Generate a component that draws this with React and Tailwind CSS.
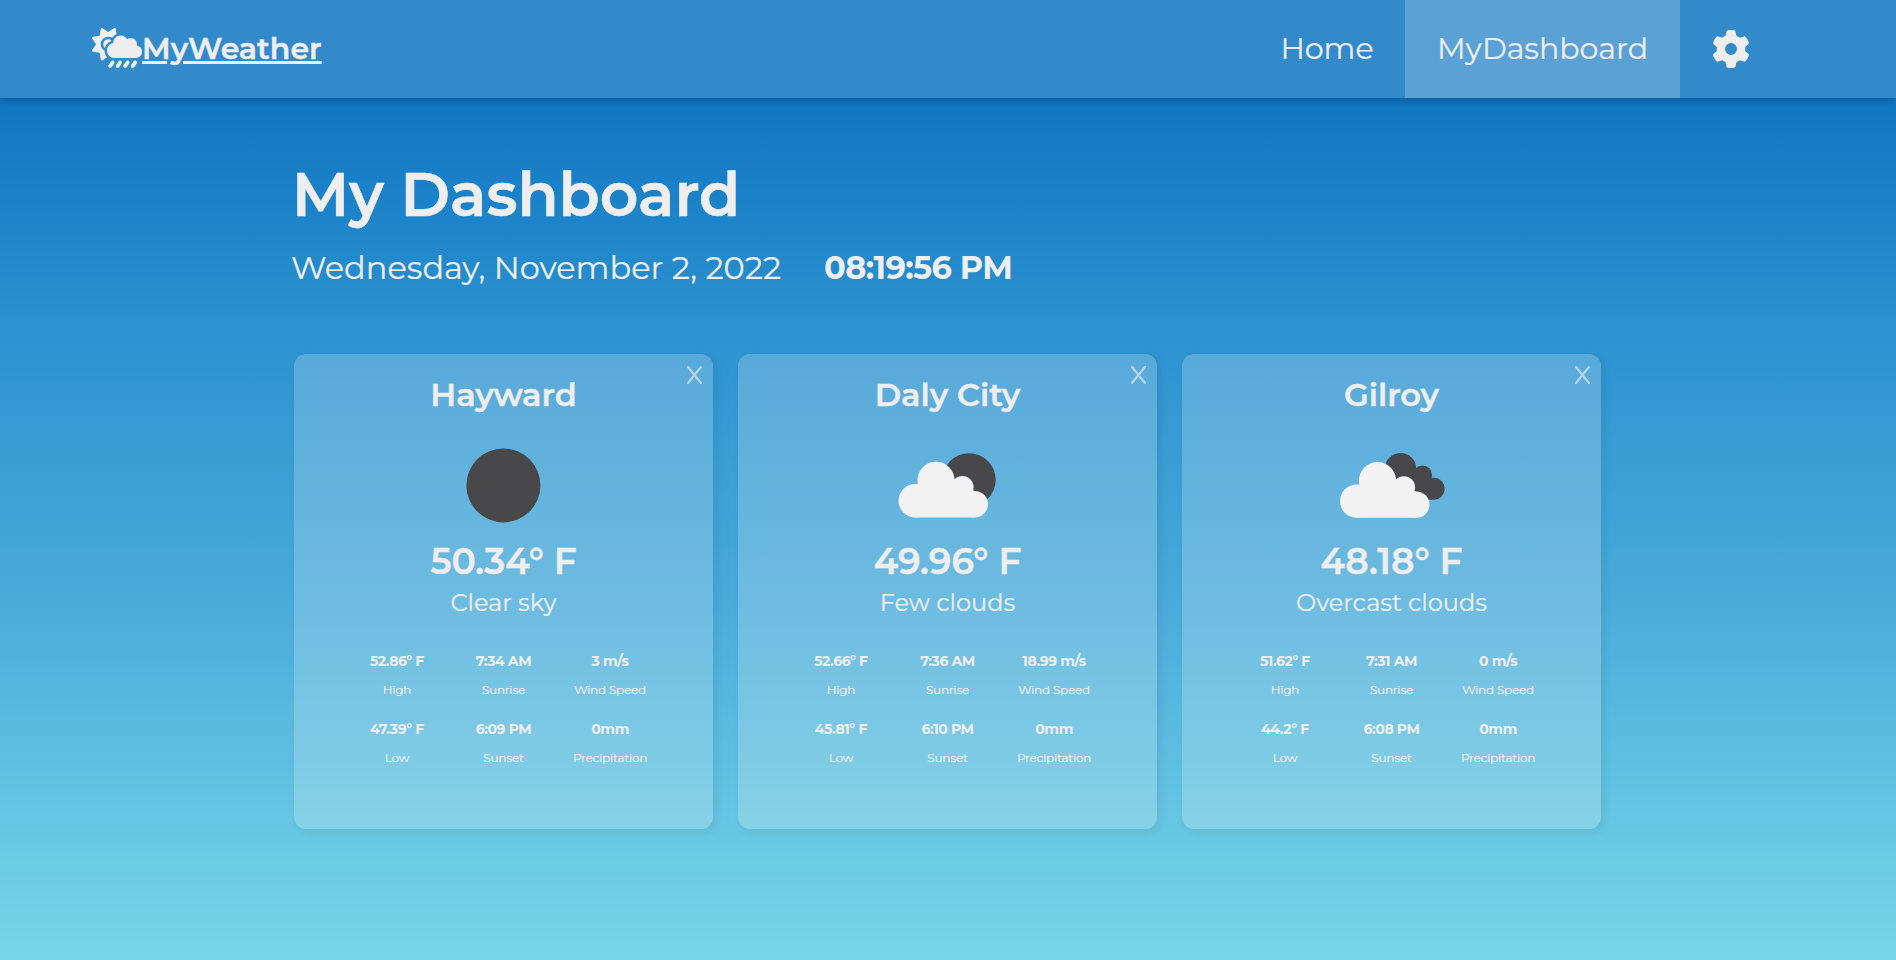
import { FaCloudSunRain, FaGear } from "react-icons/fa6";

const cities = [
  {
    name: "Hayward",
    icon: "clear",
    temp: "50.34° F",
    sky: "Clear sky",
    stats: [["52.86° F", "High"], ["7:34 AM", "Sunrise"], ["3 m/s", "Wind Speed"], ["47.39° F", "Low"], ["6:09 PM", "Sunset"], ["0mm", "Precipitation"]],
  },
  {
    name: "Daly City",
    icon: "few",
    temp: "49.96° F",
    sky: "Few clouds",
    stats: [["52.66° F", "High"], ["7:36 AM", "Sunrise"], ["18.99 m/s", "Wind Speed"], ["45.81° F", "Low"], ["6:10 PM", "Sunset"], ["0mm", "Precipitation"]],
  },
  {
    name: "Gilroy",
    icon: "overcast",
    temp: "48.18° F",
    sky: "Overcast clouds",
    stats: [["51.62° F", "High"], ["7:31 AM", "Sunrise"], ["0 m/s", "Wind Speed"], ["44.2° F", "Low"], ["6:08 PM", "Sunset"], ["0mm", "Precipitation"]],
  },
];

function FrontCloud({ dy = 0 }) {
  return (
    <g fill="#f2f2f2" transform={`translate(0 ${dy})`}>
      <circle cx="16.7" cy="48.2" r="16.7" />
      <circle cx="37.5" cy="27.8" r="18.6" />
      <circle cx="63.9" cy="34.6" r="11.2" />
      <circle cx="76.3" cy="51.7" r="13.2" />
      <path d="M16.7 64.9h59.6V38.5L56 30 20 32 16.7 40z" />
    </g>
  );
}

function SkyIcon({ kind }) {
  return (
    <svg className="h-[100px] w-[150px] shrink-0" viewBox="0 0 150 100" aria-hidden="true">
      {kind === "clear" && <circle cx="74.4" cy="50.4" r="37" fill="#48484a" />}
      {kind === "few" && (
        <g transform="translate(25.5 17.5)">
          <circle cx="70.6" cy="27.3" r="26.6" fill="#48484a" />
          <FrontCloud />
        </g>
      )}
      {kind === "overcast" && (
        <g transform="translate(23 17.5)">
          <g fill="#48484a">
            <circle cx="60.6" cy="16" r="15.6" />
            <circle cx="82.5" cy="22.6" r="9.6" />
            <circle cx="93.6" cy="36.3" r="11" />
            <path d="M50 16h34l8 14v17.3H60z" />
          </g>
          <FrontCloud dy={0.4} />
        </g>
      )}
    </svg>
  );
}

function Card({ city }) {
  return (
    <section className="relative flex h-[475px] w-[419px] flex-col items-center rounded-xl bg-white/20 shadow-[3px_3px_10px_rgba(0,0,0,0.08)]">
      <button className="absolute right-[11px] top-[12px] h-[18px] w-[15px] text-[#eeeeee]/60" aria-label="Remove">
        <svg viewBox="0 0 15 18" className="block h-[18px] w-[15px]" fill="none" stroke="currentColor" strokeWidth="2.3" strokeLinecap="round">
          <path d="M1 1l13 16M14 1L1 17" />
        </svg>
      </button>
      <h2 className="mt-[21px] text-[32px] leading-10 font-semibold [-webkit-text-stroke:0.4px]">{city.name}</h2>
      <div className="mt-5">
        <SkyIcon kind={city.icon} />
      </div>
      <p className="mt-[6px] text-[36px] leading-10 font-semibold [-webkit-text-stroke:0.4px]">{city.temp}</p>
      <p className="mt-[6px] text-2xl leading-8 [-webkit-text-stroke:0.2px]">{city.sky}</p>
      <div className="mt-8 grid grid-cols-[repeat(3,106.6px)] gap-y-5">
        {city.stats.map(([value, label]) => (
          <div key={label} className="flex h-12 flex-col items-center whitespace-nowrap">
            <p className="text-sm leading-5 font-bold tracking-[-0.4px]">{value}</p>
            <p className="mt-[9px] text-xs leading-5 tracking-[-0.2px] [-webkit-text-stroke:0.2px]">{label}</p>
          </div>
        ))}
      </div>
    </section>
  );
}

export default function App() {
  return (
    <div className="flex h-[960px] w-full flex-col bg-[linear-gradient(180deg,#036abd_0px,#2d93d0_340px,#49abda_600px,#64c4e2_800px,#78d5e9_960px)] font-['Montserrat','Inter',sans-serif] text-[#eeeeee]">
      <header className="flex h-[98px] w-full shrink-0 items-stretch justify-between bg-[#338acb] pr-[114px] pl-[92px] shadow-[0_2px_8px_rgba(0,0,0,0.25)]">
        <a href="#" className="flex items-center">
          <FaCloudSunRain className="mb-[2px] h-10 w-[50px]" />
          <span className="text-[30px] leading-10 font-semibold underline decoration-[3px] underline-offset-2 [-webkit-text-stroke:0.4px]">MyWeather</span>
        </a>
        <nav className="flex items-stretch text-[30px] font-normal [-webkit-text-stroke:0.2px]">
          <a href="#" className="flex w-[156px] items-center justify-center pb-px">Home</a>
          <a href="#" className="flex w-[275px] items-center justify-center bg-[#5ca1d6] pb-px">MyDashboard</a>
          <a href="#" className="flex w-[102px] items-center justify-center" aria-label="Settings">
            <FaGear className="size-[38px]" />
          </a>
        </nav>
      </header>
      <main className="flex flex-col pl-[291px]">
        <h1 className="mt-[61px] pl-px text-[60px] leading-[72px] font-semibold [-webkit-text-stroke:0.6px]">My Dashboard</h1>
        <div className="mt-[17px] flex h-10 items-center text-[32px]">
          <span className="[-webkit-text-stroke:0.2px]">Wednesday, November 2, 2022</span>
          <span className="ml-[43px] font-bold tracking-[-0.6px]">08:19:56 PM</span>
        </div>
        <div className="mt-[66px] ml-[3px] flex gap-[25px]">
          {cities.map((city) => (
            <Card key={city.name} city={city} />
          ))}
        </div>
      </main>
    </div>
  );
}
